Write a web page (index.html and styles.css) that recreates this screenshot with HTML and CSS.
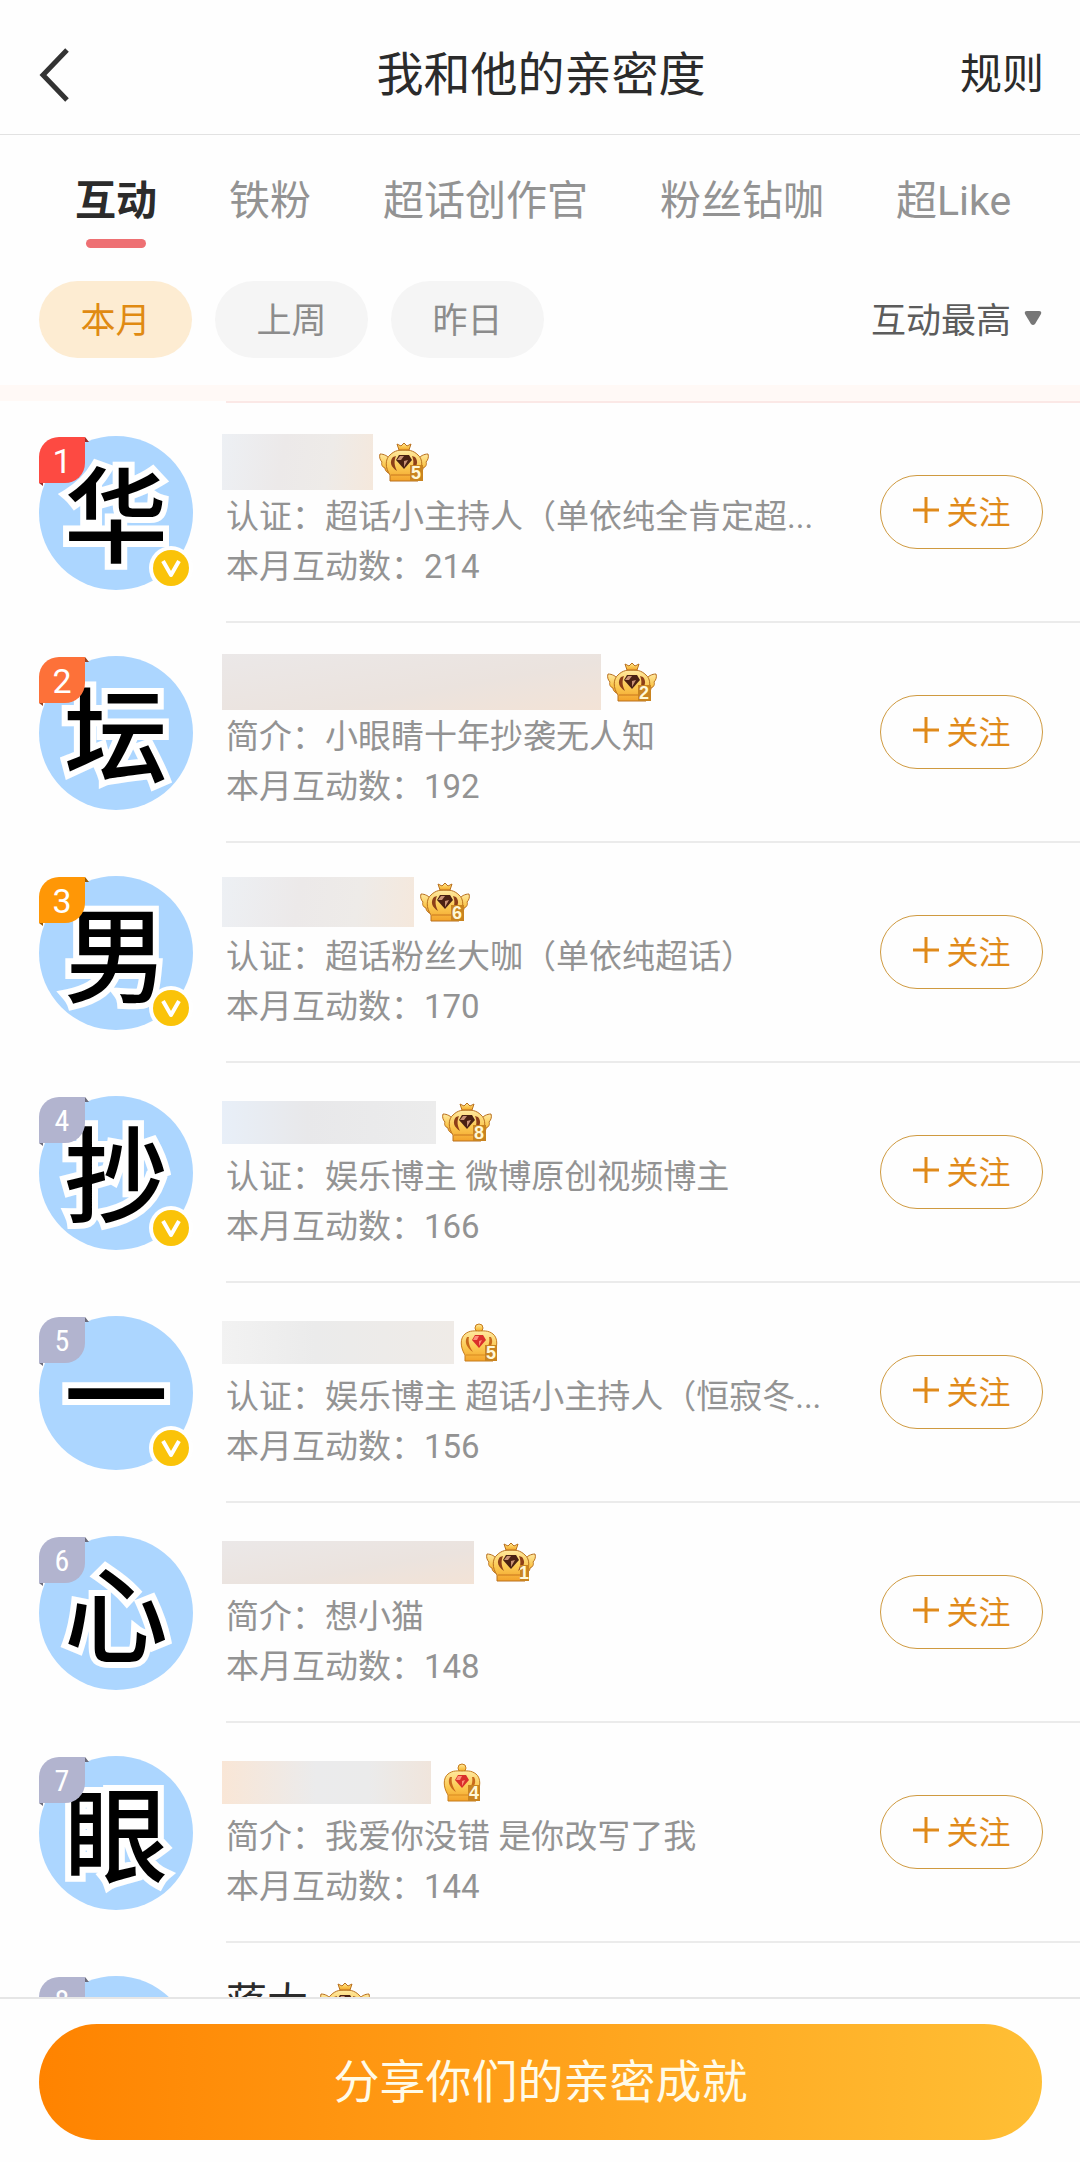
FILE: index.html
```html
<!DOCTYPE html>
<html lang="zh-CN">
<head>
<meta charset="utf-8">
<meta name="viewport" content="width=device-width, initial-scale=1">
<title>我和他的亲密度</title>
<link rel="stylesheet" href="styles.css">
</head>
<body>
<svg class="sprite" aria-hidden="true">
  <defs>
    <linearGradient id="gold" x1="0" y1="0" x2="0" y2="1">
      <stop offset="0" stop-color="#ffe9a0"/>
      <stop offset=".55" stop-color="#fbc850"/>
      <stop offset="1" stop-color="#f3a22a"/>
    </linearGradient>
    <symbol id="crown-wing" viewBox="0 0 50 40">
      <g stroke="#b9701e" stroke-width="1" stroke-linejoin="round">
        <path fill="url(#gold)" d="M1 12 C5 12 9 14 12 18 L14 32 C9 32 6 29 6 26 C3 25 2 22 3 20 C1 18 0 15 1 12Z"/>
        <path fill="url(#gold)" d="M49 12 C45 12 41 14 38 18 L36 32 C41 32 44 29 44 26 C47 25 48 22 47 20 C49 18 50 15 49 12Z"/>
        <path fill="url(#gold)" d="M11 39 V33 C6 26 6 17 11 13 C16 8 21 8 25 8 C29 8 34 8 39 13 C44 17 44 26 39 33 V39Z"/>
        <path fill="url(#gold)" d="M20 8 L18 2 L22 4 L25 1 L28 4 L32 2 L30 8Z"/>
      </g>
      <path fill="#8d3f18" d="M14 15 C10 20 12 25 18 29 C15 23 15 19 17 14Z M36 15 C40 20 38 25 32 29 C35 23 35 19 33 14Z"/>
      <path fill="#4a2113" d="M20 13 H30 L33 18 L25 27 L17 18Z"/>
      <path fill="#c99276" d="M21 14 H25 L22 18 H18Z M25 19 L29 18 L25 25Z"/>
      <path stroke="#c9771f" fill="none" d="M12 33 H38"/>
    </symbol>
    <symbol id="crown-plain" viewBox="0 0 38 40">
      <g stroke="#c67c1c" stroke-width="1" stroke-linejoin="round">
        <circle cx="19" cy="6" r="4" fill="url(#gold)"/>
        <path fill="url(#gold)" d="M5 39 V33 C0 25 0 16 5 12 C10 8 15 9 19 9 C23 9 28 8 33 12 C38 16 38 25 33 33 V39Z"/>
      </g>
      <path fill="#c96a1c" d="M7 15 C4 20 7 26 13 30 C9 24 8 19 9 15Z M31 15 C34 20 31 26 25 30 C29 24 30 19 29 15Z"/>
      <path fill="#d92f2b" d="M15 13 H23 L26 18 L19 26 L12 18Z"/>
      <path fill="#ff8d78" d="M15 14 H19 L17 18 H13Z M19 19 L22 18 L19 24Z"/>
      <path stroke="#d98a20" fill="none" d="M6 33 H32"/>
    </symbol>
    <symbol id="verified" viewBox="0 0 44 44">
      <circle cx="22" cy="22" r="22" fill="#fff"/>
      <circle cx="22" cy="22" r="18" fill="#fac309"/>
      <path d="M14 15 L22 29 L30 15" fill="none" stroke="#fff" stroke-width="4" stroke-linejoin="round"/>
    </symbol>
    <symbol id="plus" viewBox="0 0 28 28">
      <path d="M14 1 V27 M1 14 H27" stroke="currentColor" stroke-width="3" fill="none"/>
    </symbol>
  </defs>
</svg>

<div class="app">
  <header class="topbar">
    <button class="back" type="button" aria-label="返回">
      <svg class="back-icon" viewBox="0 0 32 54" aria-hidden="true"><path d="M29 2 L5 27 L29 52" fill="none" stroke="currentColor" stroke-width="5"/></svg>
    </button>
    <h1 class="title">我和他的亲密度</h1>
    <a class="rules" href="#rules">规则</a>
  </header>

  <nav class="tabs">
    <a class="tab tab--active" href="#interact" aria-current="page">互动</a>
    <a class="tab" href="#iron">铁粉</a>
    <a class="tab" href="#creator">超话创作官</a>
    <a class="tab" href="#diamond">粉丝钻咖</a>
    <a class="tab" href="#like">超Like</a>
  </nav>

  <div class="filters">
    <button class="chip chip--active" type="button">本月</button>
    <button class="chip" type="button">上周</button>
    <button class="chip" type="button">昨日</button>
    <button class="sort" type="button">互动最高
      <svg class="sort-icon" viewBox="0 0 18 16" aria-hidden="true"><path d="M3 1 H15 Q18 1 17 4 L11 14 Q9 16 7 14 L1 4 Q0 1 3 1Z" fill="currentColor"/></svg>
    </button>
  </div>

  <ol class="list">
    <li class="row">
      <div class="avatar"><span class="glyph">华</span><span class="rank rank--1">1</span><svg class="verified" aria-label="认证"><use href="#verified"/></svg></div>
      <div class="body">
        <div class="info">
          <div class="name"><span class="mask mask--tall mask--cool" style="width:151px"></span><svg class="crown" viewBox="0 0 50 40"><use href="#crown-wing"/><rect class="lv-box" x="31" y="23" width="13" height="16"/><text class="lv" x="37" y="37">5</text></svg></div>
          <p class="line">认证：超话小主持人（单依纯全肯定超...</p>
          <p class="line">本月互动数：214</p>
        </div>
        <button class="follow" type="button"><svg class="plus" aria-hidden="true"><use href="#plus"/></svg>关注</button>
      </div>
    </li>
    <li class="row">
      <div class="avatar"><span class="glyph">坛</span><span class="rank rank--2">2</span></div>
      <div class="body">
        <div class="info">
          <div class="name"><span class="mask mask--tall mask--warm" style="width:379px"></span><svg class="crown" viewBox="0 0 50 40"><use href="#crown-wing"/><rect class="lv-box" x="31" y="23" width="13" height="16"/><text class="lv" x="37" y="37">2</text></svg></div>
          <p class="line">简介：小眼睛十年抄袭无人知</p>
          <p class="line">本月互动数：192</p>
        </div>
        <button class="follow" type="button"><svg class="plus" aria-hidden="true"><use href="#plus"/></svg>关注</button>
      </div>
    </li>
    <li class="row">
      <div class="avatar"><span class="glyph">男</span><span class="rank rank--3">3</span><svg class="verified" aria-label="认证"><use href="#verified"/></svg></div>
      <div class="body">
        <div class="info">
          <div class="name"><span class="mask mask--mid mask--cool" style="width:192px"></span><svg class="crown" viewBox="0 0 50 40"><use href="#crown-wing"/><rect class="lv-box" x="31" y="23" width="13" height="16"/><text class="lv" x="37" y="37">6</text></svg></div>
          <p class="line">认证：超话粉丝大咖（单依纯超话）</p>
          <p class="line">本月互动数：170</p>
        </div>
        <button class="follow" type="button"><svg class="plus" aria-hidden="true"><use href="#plus"/></svg>关注</button>
      </div>
    </li>
    <li class="row">
      <div class="avatar"><span class="glyph">抄</span><span class="rank">4</span><svg class="verified" aria-label="认证"><use href="#verified"/></svg></div>
      <div class="body">
        <div class="info">
          <div class="name"><span class="mask mask--blue" style="width:214px"></span><svg class="crown" viewBox="0 0 50 40"><use href="#crown-wing"/><rect class="lv-box" x="31" y="23" width="13" height="16"/><text class="lv" x="37" y="37">8</text></svg></div>
          <p class="line">认证：娱乐博主 微博原创视频博主</p>
          <p class="line">本月互动数：166</p>
        </div>
        <button class="follow" type="button"><svg class="plus" aria-hidden="true"><use href="#plus"/></svg>关注</button>
      </div>
    </li>
    <li class="row">
      <div class="avatar"><span class="glyph">一</span><span class="rank">5</span><svg class="verified" aria-label="认证"><use href="#verified"/></svg></div>
      <div class="body">
        <div class="info">
          <div class="name"><span class="mask mask--gray" style="width:232px"></span><svg class="crown crown--plain" viewBox="0 0 38 40"><use href="#crown-plain"/><rect class="lv-box" x="25" y="23" width="12" height="16"/><text class="lv" x="31" y="37">5</text></svg></div>
          <p class="line">认证：娱乐博主 超话小主持人（恒寂冬...</p>
          <p class="line">本月互动数：156</p>
        </div>
        <button class="follow" type="button"><svg class="plus" aria-hidden="true"><use href="#plus"/></svg>关注</button>
      </div>
    </li>
    <li class="row">
      <div class="avatar"><span class="glyph">心</span><span class="rank">6</span></div>
      <div class="body">
        <div class="info">
          <div class="name name--wide"><span class="mask mask--warm" style="width:252px"></span><svg class="crown" viewBox="0 0 50 40"><use href="#crown-wing"/><rect class="lv-box" x="34" y="23" width="9" height="16"/><text class="lv" x="38" y="37">1</text></svg></div>
          <p class="line">简介：想小猫</p>
          <p class="line">本月互动数：148</p>
        </div>
        <button class="follow" type="button"><svg class="plus" aria-hidden="true"><use href="#plus"/></svg>关注</button>
      </div>
    </li>
    <li class="row">
      <div class="avatar"><span class="glyph">眼</span><span class="rank">7</span></div>
      <div class="body">
        <div class="info">
          <div class="name name--wide"><span class="mask mask--peach" style="width:209px"></span><svg class="crown crown--plain" viewBox="0 0 38 40"><use href="#crown-plain"/><rect class="lv-box" x="25" y="23" width="12" height="16"/><text class="lv" x="31" y="37">4</text></svg></div>
          <p class="line">简介：我爱你没错 是你改写了我</p>
          <p class="line">本月互动数：144</p>
        </div>
        <button class="follow" type="button"><svg class="plus" aria-hidden="true"><use href="#plus"/></svg>关注</button>
      </div>
    </li>
    <li class="row">
      <div class="avatar"><span class="glyph">肯</span><span class="rank">8</span></div>
      <div class="body">
        <div class="info">
          <div class="name name--wide"><span class="nick">蒋大</span><svg class="crown" viewBox="0 0 50 40"><use href="#crown-wing"/></svg></div>
        </div>
      </div>
    </li>
  </ol>

  <footer class="footer">
    <button class="share" type="button">分享你们的亲密成就</button>
  </footer>
</div>
</body>
</html>
```
FILE: styles.css
```css
* {
  box-sizing: border-box;
}

body {
  margin: 0;
  background: #fefefe;
  color: #2b2b2b;
  font-family: Roboto, "Noto Sans CJK SC", sans-serif;
}

button {
  margin: 0;
  padding: 0;
  border: 0;
  background: none;
  color: inherit;
  font: inherit;
  cursor: pointer;
}

a {
  color: inherit;
  text-decoration: none;
}

.sprite {
  position: absolute;
  width: 0;
  height: 0;
}

.app {
  display: flex;
  flex-direction: column;
  height: 100vh;
}

/* Header */
.topbar {
  display: grid;
  grid-template-columns: 1fr auto 1fr;
  align-items: center;
  flex: none;
  height: 135px;
  padding: 16px 36px 0 38px;
  border-bottom: 1px solid #e2e2e2;
}

.back {
  justify-self: start;
  display: flex;
  color: #333;
}

.back-icon {
  width: 32px;
  height: 54px;
}

.title {
  margin: 0;
  font-size: 47px;
  line-height: 60px;
  font-weight: 400;
}

.rules {
  justify-self: end;
  font-size: 42px;
  line-height: 60px;
}

/* Tabs */
.tabs {
  display: flex;
  flex: none;
  gap: 72px;
  padding: 36px 0 0 75px;
  font-size: 41px;
  line-height: 60px;
  color: #939393;
  white-space: nowrap;
}

.tab--active {
  color: #2b2b2b;
  font-weight: 700;
}

.tab--active::after {
  content: "";
  display: block;
  width: 60px;
  height: 9px;
  margin: 8px auto 0;
  border-radius: 5px;
  background: #ee7073;
}

/* Filters */
.filters {
  display: flex;
  flex: none;
  align-items: center;
  gap: 23px;
  padding: 33px 38px 27px 39px;
  border-bottom: 16px solid #fff9f6;
  font-size: 35px;
}

.chip {
  width: 153px;
  height: 77px;
  padding-bottom: 4px;
  border-radius: 39px;
  background: #f5f5f5;
  color: #8c8c8c;
}

.chip--active {
  background: #fdecd2;
  color: #e08a12;
}

.sort {
  display: flex;
  align-items: center;
  gap: 13px;
  margin-left: auto;
  padding-bottom: 4px;
  color: #5c5c5c;
}

.sort-icon {
  width: 18px;
  height: 16px;
  color: #777;
}

/* Ranking list */
.list {
  flex: 1;
  min-height: 0;
  margin: 0;
  padding: 0;
  overflow-y: auto;
  scrollbar-width: none;
  list-style: none;
}

.row {
  display: flex;
  gap: 33px;
  height: 220px;
  padding-left: 39px;
}

.avatar {
  position: relative;
  display: flex;
  align-items: center;
  justify-content: center;
  flex: none;
  width: 154px;
  height: 154px;
  margin-top: 35px;
  padding-bottom: 7px;
  border-radius: 50%;
  background: #acd6ff;
}

.glyph {
  color: #000;
  font-family: "Noto Sans CJK SC", sans-serif;
  font-size: 104px;
  line-height: 154px;
  font-weight: 500;
  -webkit-text-stroke: 12px #fff;
  paint-order: stroke fill;
}

.rank {
  position: absolute;
  left: 0;
  top: 1px;
  width: 46px;
  height: 46px;
  border-radius: 20px 0 20px 0;
  background: #b2b4cf;
  color: #fff;
  font-family: "Roboto Condensed", "Liberation Sans Narrow", Roboto, sans-serif;
  font-size: 30px;
  line-height: 48px;
  text-align: center;
}

.rank::before,
.rank::after {
  content: "";
  position: absolute;
  width: 4px;
  height: 5px;
  background: inherit;
  filter: brightness(0.6);
}

.rank::before {
  left: 46px;
  top: 0;
  clip-path: polygon(0 0, 100% 100%, 0 100%);
}

.rank::after {
  left: 0;
  top: 46px;
  height: 3px;
  clip-path: polygon(0 0, 100% 0, 100% 100%);
}

.rank--1,
.rank--2,
.rank--3 {
  font-family: Roboto, sans-serif;
  font-size: 34px;
}

.rank--1 {
  background: #fd4a42;
}

.rank--2 {
  background: #fd7139;
}

.rank--3 {
  background: #ff9706;
}

.verified {
  position: absolute;
  right: 0;
  bottom: 0;
  width: 44px;
  height: 44px;
}

.body {
  display: flex;
  align-items: center;
  flex: 1;
  min-width: 0;
  padding-right: 37px;
  border-top: 2px solid #ebebeb;
}

.row:first-child .body {
  border-top-color: #fbe8e6;
}

.info {
  flex: 1;
  min-width: 0;
  align-self: flex-start;
  padding-top: 32px;
}

.name {
  display: flex;
  align-items: center;
  gap: 6px;
  height: 54px;
  margin-bottom: 3px;
  font-size: 41px;
}

.name--wide {
  gap: 12px;
}

.nick {
  padding-bottom: 6px;
}

.mask {
  height: 43px;
  margin-left: -4px;
  background: #ebe8e6;
}

.mask--mid {
  height: 50px;
}

.mask--tall {
  height: 56px;
}

.mask--cool {
  background: linear-gradient(100deg, #edf0f4, #ece9e9 40%, #eeebe8 70%, #f5e8dc);
}

.mask--warm {
  background: linear-gradient(170deg, #ebe8e8, #ebe3de 60%, #f3e3d6);
}

.mask--blue {
  background: linear-gradient(90deg, #e8eff8, #e8e8ea 40%, #ececec);
}

.mask--gray {
  background: linear-gradient(90deg, #f2f2f2, #ebebeb 40%, #efebe7);
}

.mask--peach {
  background: linear-gradient(90deg, #f9e6d6, #ebebec 45%, #ebebeb 70%, #f0e5dc);
}

.crown {
  flex: none;
  width: 50px;
  height: 40px;
}

.crown--plain {
  width: 38px;
}

.lv-box {
  fill: #c98420;
}

.lv {
  fill: #fff8d8;
  font-family: "Liberation Sans", sans-serif;
  font-size: 18px;
  font-weight: 700;
  text-anchor: middle;
}

.line {
  margin: 0;
  color: #939393;
  font-size: 33px;
  line-height: 50px;
  white-space: nowrap;
}

.follow {
  display: flex;
  align-items: center;
  justify-content: center;
  flex: none;
  gap: 6px;
  width: 163px;
  height: 74px;
  padding-bottom: 4px;
  border: 1px solid #cf9a40;
  border-radius: 37px;
  color: #e08a1a;
  font-size: 32px;
}

.plus {
  width: 28px;
  height: 28px;
}

/* Bottom action */
.footer {
  flex: none;
  padding: 25px 38px 22px 39px;
  border-top: 2px solid #e6e6e6;
}

.share {
  display: block;
  width: 100%;
  height: 116px;
  padding-bottom: 8px;
  border-radius: 58px;
  background: linear-gradient(90deg, #ff8300, #ffbf35);
  color: #fffbe8;
  font-size: 46px;
}
```
